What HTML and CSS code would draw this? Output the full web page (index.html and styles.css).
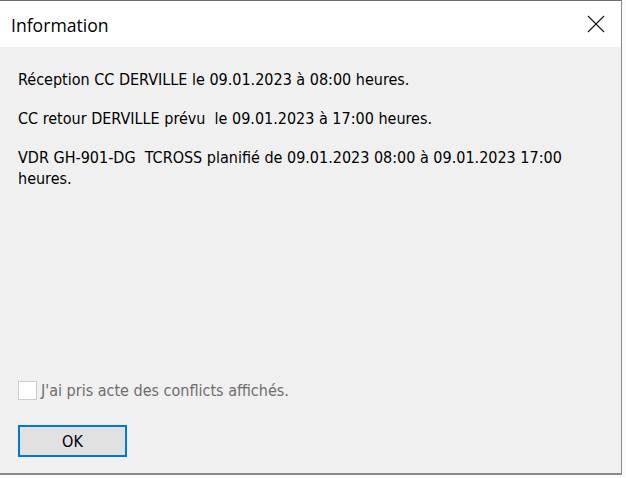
FILE: index.html
```html
<!DOCTYPE html>
<html lang="fr">
<head>
<meta charset="utf-8">
<title>Information</title>
<link rel="stylesheet" href="styles.css">
</head>
<body>
<div class="dialog">
  <div class="titlebar">
    <span class="title">Information</span>
    <span class="close" aria-label="Fermer">
      <svg width="18" height="18" viewBox="0 0 18 18"><path d="M1 1 L17 17 M17 1 L1 17" stroke="#1a1a1a" stroke-width="1.2" fill="none"/></svg>
    </span>
  </div>
  <div class="content">
    <div class="messages">
      <p class="msg">Réception CC DERVILLE le 09.01.2023 à 08:00 heures.</p>
      <p class="msg">CC retour DERVILLE prévu&nbsp; le 09.01.2023 à 17:00 heures.</p>
      <p class="msg">VDR GH-901-DG&nbsp; TCROSS planifié de 09.01.2023 08:00 à 09.01.2023 17:00 heures.</p>
    </div>
    <label class="check">
      <span class="box"></span>
      <span class="check-label">J'ai pris acte des conflicts affichés.</span>
    </label>
    <button class="ok">OK</button>
  </div>
</div>
</body>
</html>
```
FILE: styles.css
```css
html, body {
  margin: 0;
  padding: 0;
}
body {
  width: 626px;
  height: 478px;
  background: #fbfbfb;
  overflow: hidden;
}
.dialog {
  width: 622px;
  height: 475px;
  box-sizing: border-box;
  border-top: 1px solid #6f6f6f;
  border-right: 1px solid #8a8a8a;
  border-bottom: 2px solid #8a8a8a;
  background: #f0f0f0;
  display: flex;
  flex-direction: column;
}
.titlebar {
  height: 46px;
  background: #ffffff;
  display: flex;
  align-items: center;
  justify-content: space-between;
  padding: 0 16px 0 11px;
  flex: none;
}
.title {
  font-family: "Open Sans", "Noto Sans", sans-serif;
  font-size: 17.6px;
  color: #000;
  margin-top: 1px;
}
.close {
  display: flex;
  width: 18px;
  height: 18px;
  margin-top: -1px;
}
.content {
  flex: 1;
  display: flex;
  flex-direction: column;
  padding: 22px 18px 16px 18px;
  font-family: "DejaVu Sans Condensed", "DejaVu Sans", sans-serif;
  font-size: 16px;
  color: #000;
}
.messages {
  flex: 1;
}
.msg {
  margin: 0 0 18px 0;
  line-height: 21px;
  width: 575px;
}
.check {
  display: flex;
  align-items: center;
  gap: 4px;
  margin-bottom: 25px;
}
.box {
  width: 17px;
  height: 17px;
  border: 1px solid #cccccc;
  background: #ffffff;
  flex: none;
}
.check-label {
  color: #6d6d6d;
}
.ok {
  width: 109px;
  height: 32px;
  box-sizing: border-box;
  border: 2px solid #0078d7;
  background: #e1e1e1;
  font-family: "DejaVu Sans Condensed", "DejaVu Sans", sans-serif;
  font-size: 16px;
  color: #000;
  padding: 0;
}
```
